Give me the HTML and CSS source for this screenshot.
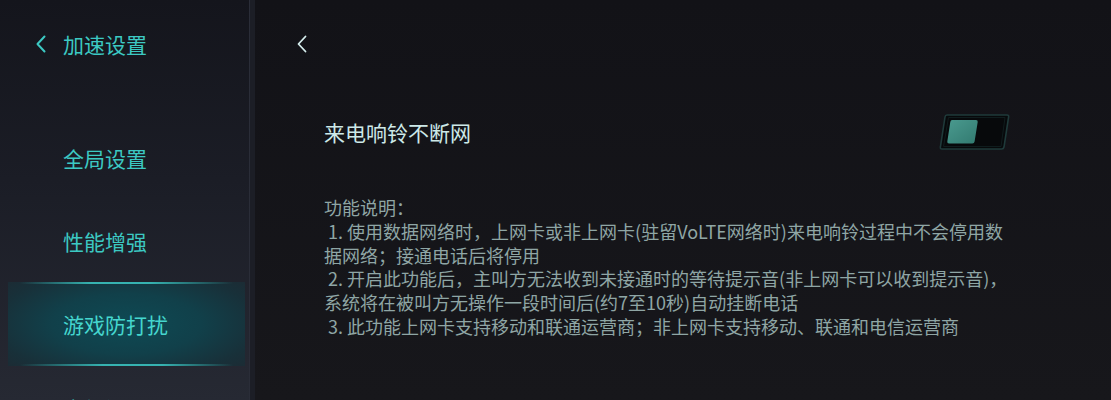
FILE: index.html
```html
<!DOCTYPE html>
<html lang="zh-CN">
<head>
<meta charset="utf-8">
<title>游戏防打扰</title>
<link rel="stylesheet" href="styles.css">
</head>
<body>
<div class="app">
  <aside class="sidebar">
    <div class="side-header">
      <svg class="chev" width="12" height="18" viewBox="0 0 12 18"><path d="M9.5 1.5 L2.5 9 L9.5 16.5" fill="none" stroke="#3cc9c3" stroke-width="2" stroke-linecap="round" stroke-linejoin="round"/></svg>
      <span class="side-title">加速设置</span>
    </div>
    <ul class="menu">
      <li class="menu-item">全局设置</li>
      <li class="menu-item">性能增强</li>
      <li class="menu-item active">游戏防打扰</li>
      <li class="menu-item">高级设置</li>
    </ul>
  </aside>
  <main class="main">
    <div class="main-header">
      <svg class="chev" width="12" height="18" viewBox="0 0 12 18"><path d="M9.5 1.5 L2.5 9 L9.5 16.5" fill="none" stroke="#d6eeee" stroke-width="1.8" stroke-linecap="round" stroke-linejoin="round"/></svg>
    </div>
    <div class="setting-row">
      <span class="setting-title">来电响铃不断网</span>
      <svg class="toggle" width="74" height="40" viewBox="0 0 74 40">
        <defs>
          <linearGradient id="knob" x1="0" y1="0" x2="1" y2="1">
            <stop offset="0" stop-color="#4a9a8f"/>
            <stop offset="1" stop-color="#327a70"/>
          </linearGradient>
        </defs>
        <path d="M9 3 L69 3 Q71 3 70.6 5 L66 35 Q65.6 37 63.6 37 L4 37 Q2 37 2.4 35 L7 5 Q7.3 3 9 3 Z" fill="#07090b" stroke="#1f3a3a" stroke-width="1.6"/>
        <path d="M10.5 5.5 L67 5.5 L63 34.5 L5.5 34.5 Z" fill="none" stroke="#0f1c1d" stroke-width="1"/>
        <path d="M14 8 L38 8 Q40 8 39.7 10 L36.6 29.5 Q36.3 31.5 34.3 31.5 L11 31.5 Q9 31.5 9.3 29.5 L12.3 10 Q12.6 8 14 8 Z" fill="url(#knob)"/>
      </svg>
    </div>
    <div class="desc">
      <div class="line">功能说明：</div>
      <div class="line">&nbsp;1. 使用数据网络时，上网卡或非上网卡(驻留VoLTE网络时)来电响铃过程中不会停用数</div>
      <div class="line">据网络；接通电话后将停用</div>
      <div class="line">&nbsp;2. 开启此功能后，主叫方无法收到未接通时的等待提示音(非上网卡可以收到提示音)，</div>
      <div class="line">系统将在被叫方无操作一段时间后(约7至10秒)自动挂断电话</div>
      <div class="line">&nbsp;3. 此功能上网卡支持移动和联通运营商；非上网卡支持移动、联通和电信运营商</div>
    </div>
  </main>
</div>
</body>
</html>
```

FILE: styles.css
```css
html, body {
  margin: 0;
  padding: 0;
  width: 1111px;
  height: 400px;
  overflow: hidden;
  background: #131318;
  font-family: "Noto Sans CJK SC", "Noto Sans", sans-serif;
}

.app {
  display: flex;
  height: 400px;
}

.sidebar {
  width: 255px;
  flex: none;
  background: linear-gradient(180deg, #14151c 0%, #1b1d26 45%, #262933 100%);
  box-shadow: inset -5px 0 0 #1c1e26, inset -6px 0 0 #2a2d38;
  overflow: hidden;
}

.side-header {
  height: 88px;
  display: flex;
  align-items: center;
  padding-left: 35px;
  gap: 16px;
}

.chev {
  display: block;
  flex: none;
}

.side-title {
  color: #3cc9c3;
  font-size: 21px;
  line-height: 28px;
}

.menu {
  list-style: none;
  margin: 28px 0 0 0;
  padding: 0;
}

.menu-item {
  height: 83px;
  display: flex;
  align-items: center;
  padding-left: 63px;
  color: #3cc9c3;
  font-size: 21px;
}

.menu-item.active {
  height: 84px;
  margin: 0 10px 0 8px;
  padding-left: 55px;
  color: #45d6ce;
  background:
    linear-gradient(90deg, rgba(47,183,179,0) 5%, rgba(60,200,196,0.85) 35%, rgba(60,200,196,0.85) 60%, rgba(47,183,179,0) 95%) top / 100% 2px no-repeat,
    linear-gradient(90deg, rgba(47,183,179,0) 5%, rgba(60,200,196,0.85) 40%, rgba(60,200,196,0.85) 65%, rgba(47,183,179,0) 95%) bottom / 100% 2px no-repeat,
    radial-gradient(ellipse 70% 80% at 50% 50%, #0e4a54 0%, #11404a 45%, #183039 80%, #1d2a33 100%);
}

.main {
  flex: 1;
  padding: 0 103px 0 0;
  background: linear-gradient(180deg, #121217 0%, #17171b 100%);
}

.main-header {
  height: 88px;
  display: flex;
  align-items: center;
  padding-left: 41px;
}

.setting-row {
  margin-top: 24px;
  height: 40px;
  display: flex;
  align-items: center;
  justify-content: space-between;
  padding-left: 69px;
}

.setting-title {
  color: #cde9e8;
  font-size: 21px;
}

.toggle {
  display: block;
  margin-right: -4px;
}

.desc {
  margin-top: 44px;
  padding-left: 69px;
  color: #8fa6a5;
  font-size: 18px;
  line-height: 23.8px;
  white-space: nowrap;
}
```
